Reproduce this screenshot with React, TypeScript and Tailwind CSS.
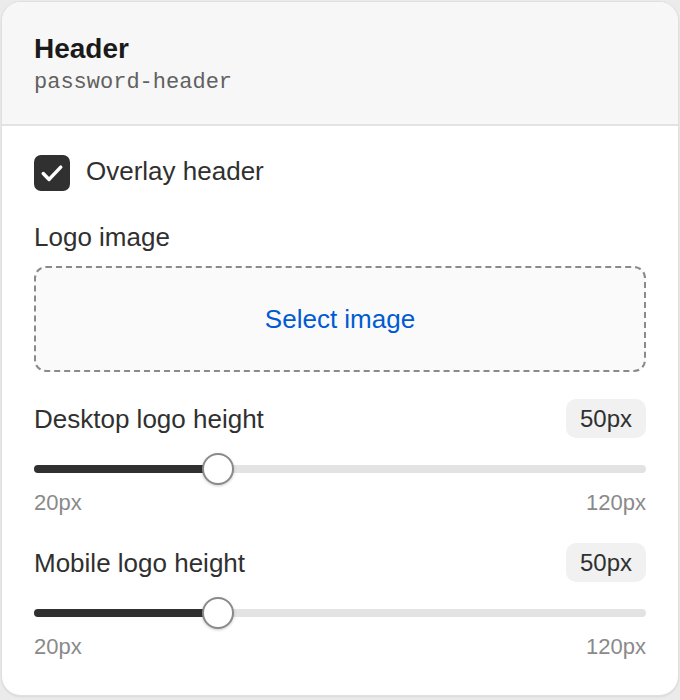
import React from 'react';

interface RangeFieldProps {
  label: string;
  value: number;
  min: number;
  max: number;
}

const RangeField: React.FC<RangeFieldProps> = ({ label, value, min, max }) => {
  const pct = ((value - min) / (max - min)) * 100;
  return (
    <div className="flex flex-col">
      <div className="flex items-center justify-between">
        <span className="text-[26px] leading-[32px] text-[#303030]">{label}</span>
        <span className="h-[39px] px-[14px] rounded-[10px] bg-[#f1f1f1] text-[24px] leading-[39px] text-[#303030]">
          {value}px
        </span>
      </div>
      <div className="relative h-8 mt-[15px] flex items-center">
        <div className="h-2 w-full rounded-full bg-[#e3e3e3]">
          <div className="h-2 rounded-full bg-[#303030]" style={{ width: `${pct}%` }}></div>
        </div>
        <div
          className="absolute top-0 w-8 h-8 -ml-4 rounded-full bg-white border-2 border-[#8a8a8a] shadow-[0_1px_3px_rgba(0,0,0,0.2)]"
          style={{ left: `${pct}%` }}
        ></div>
      </div>
      <div className="flex justify-between mt-[5px] text-[22px] leading-[26px] text-[#8a8a8a]">
        <span>{min}px</span>
        <span>{max}px</span>
      </div>
    </div>
  );
};

const App: React.FC = () => {
  return (
    <div className="w-[680px] h-[700px] bg-[#ebebeb] p-px font-['Liberation_Sans',Arial,sans-serif]">
      <div className="h-[695px] rounded-[20px] border border-[#e0e0e0] bg-white overflow-hidden shadow-[0_1px_2px_rgba(0,0,0,0.08)]">
        <div className="bg-[#f7f7f7] border-b-2 border-[#e3e3e3] px-[32px] pt-[30px] pb-[26px]">
          <h2 className="text-[28px] leading-[34px] font-bold text-[#1a1a1a]">Header</h2>
          <p className="mt-[2px] font-['Liberation_Mono',monospace] text-[22px] leading-[30px] text-[#616161]">
            password-header
          </p>
        </div>

        <div className="px-[32px] pt-[29px] flex flex-col">
          <label className="flex items-center gap-[16px]">
            <span className="w-9 h-9 rounded-[7px] bg-[#303030] flex items-center justify-center">
              <svg width="28" height="28" viewBox="0 0 24 24" fill="none">
                <path d="M4.5 12.5l5 5L19.5 7" stroke="white" strokeWidth="3" strokeLinecap="round" strokeLinejoin="round" />
              </svg>
            </span>
            <span className="pb-1 text-[26px] leading-[32px] text-[#303030]">Overlay header</span>
          </label>

          <span className="mt-[30px] text-[26px] leading-[32px] text-[#303030]">Logo image</span>
          <button className="mt-[13px] h-[106px] w-full rounded-[12px] border-2 border-dashed border-[#8a8a8a] bg-[#fafafa] text-[26px] text-[#005bd3]">
            Select image
          </button>

          <div className="mt-[27px]">
            <RangeField label="Desktop logo height" value={50} min={20} max={120} />
          </div>
          <div className="mt-[27px]">
            <RangeField label="Mobile logo height" value={50} min={20} max={120} />
          </div>
        </div>
      </div>
    </div>
  );
};

export default App;
